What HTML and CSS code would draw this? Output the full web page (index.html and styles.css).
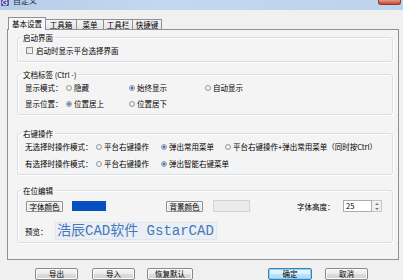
FILE: index.html
```html
<!DOCTYPE html>
<html lang="zh-CN">
<head>
<meta charset="utf-8">
<title>自定义</title>
<link rel="stylesheet" href="styles.css">
</head>
<body>
<div class="window">
  <div class="titlebar">
    <svg class="app-icon" width="8" height="7" viewBox="0 0 8 7"><rect x="0" y="0" width="8" height="7" rx="1" fill="#5b55a8"/><path d="M6 2.2 A2.4 2.4 0 1 0 6 4.8 L6 3.6 L4.4 3.6" fill="none" stroke="#fff" stroke-width="1"/></svg>
    <span class="title">自定义</span>
    <span class="close"></span>
  </div>
  <div class="client">
    <div class="tabs">
      <div class="tab active w1">基本设置</div>
      <div class="tab w2">工具箱</div>
      <div class="tab w3">菜单</div>
      <div class="tab w4">工具栏</div>
      <div class="tab w5">快捷键</div>
    </div>
    <div class="panel">
      <fieldset class="group g1">
        <legend>启动界面</legend>
        <div class="row check-row">
          <span class="cb"></span><span>启动时显示平台选择界面</span>
        </div>
      </fieldset>

      <fieldset class="group g2">
        <legend>文档标签 (Ctrl -)</legend>
        <div class="row cols2">
          <span class="lbl">显示模式：</span>
          <span class="opt"><i class="rb"></i>隐藏</span>
          <span class="opt"><i class="rb on"></i>始终显示</span>
          <span class="opt"><i class="rb"></i>自动显示</span>
        </div>
        <div class="row cols2 second">
          <span class="lbl">显示位置：</span>
          <span class="opt"><i class="rb on"></i>位置居上</span>
          <span class="opt"><i class="rb"></i>位置居下</span>
        </div>
      </fieldset>

      <fieldset class="group g3">
        <legend>右键操作</legend>
        <div class="row cols3">
          <span class="lbl">无选择时操作模式：</span>
          <span class="opt"><i class="rb"></i>平台右键操作</span>
          <span class="opt"><i class="rb on"></i>弹出常用菜单</span>
          <span class="opt"><i class="rb"></i>平台右键操作+弹出常用菜单（同时按Ctrl）</span>
        </div>
        <div class="row cols3 second">
          <span class="lbl">有选择时操作模式：</span>
          <span class="opt"><i class="rb"></i>平台右键操作</span>
          <span class="opt"><i class="rb on"></i>弹出智能右键菜单</span>
        </div>
      </fieldset>

      <fieldset class="group g4">
        <legend>在位编辑</legend>
        <div class="edit-row">
          <button class="btn small b-font">字体颜色</button>
          <span class="swatch blue"></span>
          <button class="btn small b-bg">背景颜色</button>
          <span class="swatch light"></span>
          <span class="h-lbl">字体高度：</span>
          <span class="num">25</span>
          <span class="spin"><i class="up"></i><i class="down"></i></span>
        </div>
        <div class="preview-row">
          <span class="lbl">预览：</span>
          <div class="preview">浩辰CAD软件 GstarCAD</div>
        </div>
      </fieldset>
    </div>
    <div class="buttons">
      <button class="btn">导出</button>
      <button class="btn b2">导入</button>
      <button class="btn b3">恢复默认</button>
      <button class="btn default b4">确定</button>
      <button class="btn b5">取消</button>
    </div>
  </div>
</div>
</body>
</html>
```

FILE: styles.css
```css
* { box-sizing: border-box; }
html, body { margin: 0; padding: 0; }
body {
  width: 403px;
  height: 280px;
  overflow: hidden;
  background: #f0f0f0;
  font-family: "Noto Sans CJK SC", "Liberation Sans", sans-serif;
  font-size: 7.5px;
  color: #000;
}
.window { width: 403px; height: 280px; overflow: hidden; }

.titlebar {
  height: 10px;
  display: flex;
  align-items: flex-start;
  background: linear-gradient(90deg, #b4cde8 0%, #c3d8ef 40%, #bcd3ec 100%);
  overflow: hidden;
}
.app-icon { margin: -1px 0 0 1px; flex: none; }
.title { margin: -5px 0 0 4px; font-size: 8px; line-height: 11px; color: #1b2a3c; }
.close {
  margin-left: auto;
  margin-right: 2px;
  width: 23px;
  height: 5px;
  border-radius: 0 0 3px 3px;
  background: linear-gradient(#e29a86, #c8442f);
  border: 1px solid #8e3a2e;
  border-top: none;
}

.client { padding: 7px 4px 0 7px; }

.tabs { display: flex; align-items: flex-end; height: 12px; padding-left: 1px; }
.tab {
  height: 10px;
  line-height: 9px;
  text-align: center;
  border: 1px solid #8d9096;
  border-bottom: none;
  border-left: none;
  background: linear-gradient(#f6f6f6, #e4e4e4);
  white-space: nowrap;
}
.tab.active {
  height: 13px;
  line-height: 12px;
  margin-bottom: -1px;
  border-left: 1px solid #8d9096;
  background: #f7f7f7;
  position: relative;
  z-index: 1;
}
.w1 { width: 38px; }
.w2 { width: 31px; }
.w3 { width: 27px; }
.w4 { width: 29px; }
.w5 { width: 29px; }

.panel {
  width: 392px;
  border: 1px solid #8d9096;
  background: #f4f4f4;
  padding: 3px 5px 16px 9px;
}

.group {
  margin: 0;
  padding: 0 0 6px 0;
  min-width: 0;
  border: 1px solid #d5dfe5;
  border-radius: 3px;
  box-shadow: inset 1px 1px 0 #fff, 1px 1px 0 #fff;
}
.group legend {
  margin-left: 3px;
  padding: 0 2px;
  line-height: 9px;
  height: 9px;
}
.g2 { margin-top: 8px; }
.g3 { margin-top: 14px; }
.g4 { margin-top: 11px; padding-bottom: 2px; }

.row {
  height: 9px;
  line-height: 9px;
  margin-top: 4px;
  padding-left: 7px;
  display: grid;
  align-items: center;
  white-space: nowrap;
}
.g2 .second { margin-top: 7px; }
.g3 .second { margin-top: 8px; }
.cols2 { grid-template-columns: 41px 63px 76px auto; }
.cols3 { grid-template-columns: 71px 65px 64px auto; }
.check-row { display: flex; padding-left: 8px; }

.opt { display: flex; align-items: center; }
.rb {
  width: 6px;
  height: 6px;
  border-radius: 50%;
  border: 1px solid #9a9a9a;
  background: radial-gradient(circle at 50% 40%, #fdfdfd, #dcdcdc);
  margin-right: 2px;
  flex: none;
}
.rb.on {
  background: radial-gradient(circle, #1f5ea8 0, #4f92d6 1.3px, #e8eef5 1.8px, #dcdcdc 3px);
}
.cb {
  width: 7px;
  height: 7px;
  border: 1px solid #8f8f8f;
  background: linear-gradient(135deg, #dcdcdc, #fbfbfb);
  margin-right: 3px;
}

.edit-row {
  margin-top: 5px;
  padding-left: 8px;
  height: 12px;
  display: flex;
  align-items: center;
  white-space: nowrap;
}
.btn {
  font: inherit;
  color: #000;
  height: 12px;
  width: 43px;
  padding: 0;
  line-height: 10px;
  border: 1px solid #8a8a8a;
  border-radius: 2px;
  background: linear-gradient(#f5f5f5 0, #ebebeb 50%, #dddddd 50%, #d0d0d0 100%);
  box-shadow: inset 0 0 0 1px #fbfbfb;
  text-align: center;
}
.btn.small {
  height: 11px;
  width: 37px;
  border-radius: 1px;
  border-color: #8e8e8e;
  background: linear-gradient(#f3f3f3, #e2e2e2);
}
.b-bg { width: 36px; margin-left: 60px; }
.swatch { display: block; flex: none; }
.swatch.blue { width: 34px; height: 10px; margin-left: 9px; background: #0650c4; }
.swatch.light { width: 37px; height: 12px; margin-left: 10px; background: #ebebeb; border: 1px solid #d3d3d3; }
.h-lbl { margin-left: 47px; width: 33px; }
.num {
  margin-left: 13px;
  width: 29px;
  height: 12px;
  line-height: 10px;
  border: 1px solid #abadb3;
  background: #fff;
  padding-left: 2px;
}
.spin {
  width: 10px;
  height: 12px;
  border: 1px solid #c6c6c6;
  border-left: none;
  background: #f0f0f0;
  display: flex;
  flex-direction: column;
  align-items: center;
  justify-content: space-around;
}
.spin i { width: 0; height: 0; border-left: 2px solid transparent; border-right: 2px solid transparent; }
.spin .up { border-bottom: 2px solid #7a7a7a; }
.spin .down { border-top: 2px solid #7a7a7a; }

.preview-row {
  margin-top: 10px;
  padding-left: 7px;
  display: flex;
  align-items: center;
  height: 18px;
}
.preview-row .lbl { width: 30px; }
.preview {
  width: 162px;
  height: 18px;
  background: #eaeff5;
  border: 1px solid #e0e6ee;
  color: #4677bb;
  font-family: "Liberation Mono", "Noto Sans CJK SC", monospace;
  font-size: 14px;
  line-height: 16px;
  padding-left: 1px;
  white-space: nowrap;
  overflow: hidden;
}

.buttons {
  margin-top: 8px;
  padding-left: 28px;
  display: flex;
}
.b2 { margin-left: 14px; }
.b3 { margin-left: 12px; width: 46px; }
.b4 { margin-left: 75px; width: 44px; }
.b5 { margin-left: 13px; }
.btn.default {
  border-color: #3c7fb1;
  background: linear-gradient(#eaf6fd 0, #d9f0fc 50%, #bee6fd 50%, #a7d9f5 100%);
  box-shadow: inset 0 0 0 1px #8fd0f2;
}
```
